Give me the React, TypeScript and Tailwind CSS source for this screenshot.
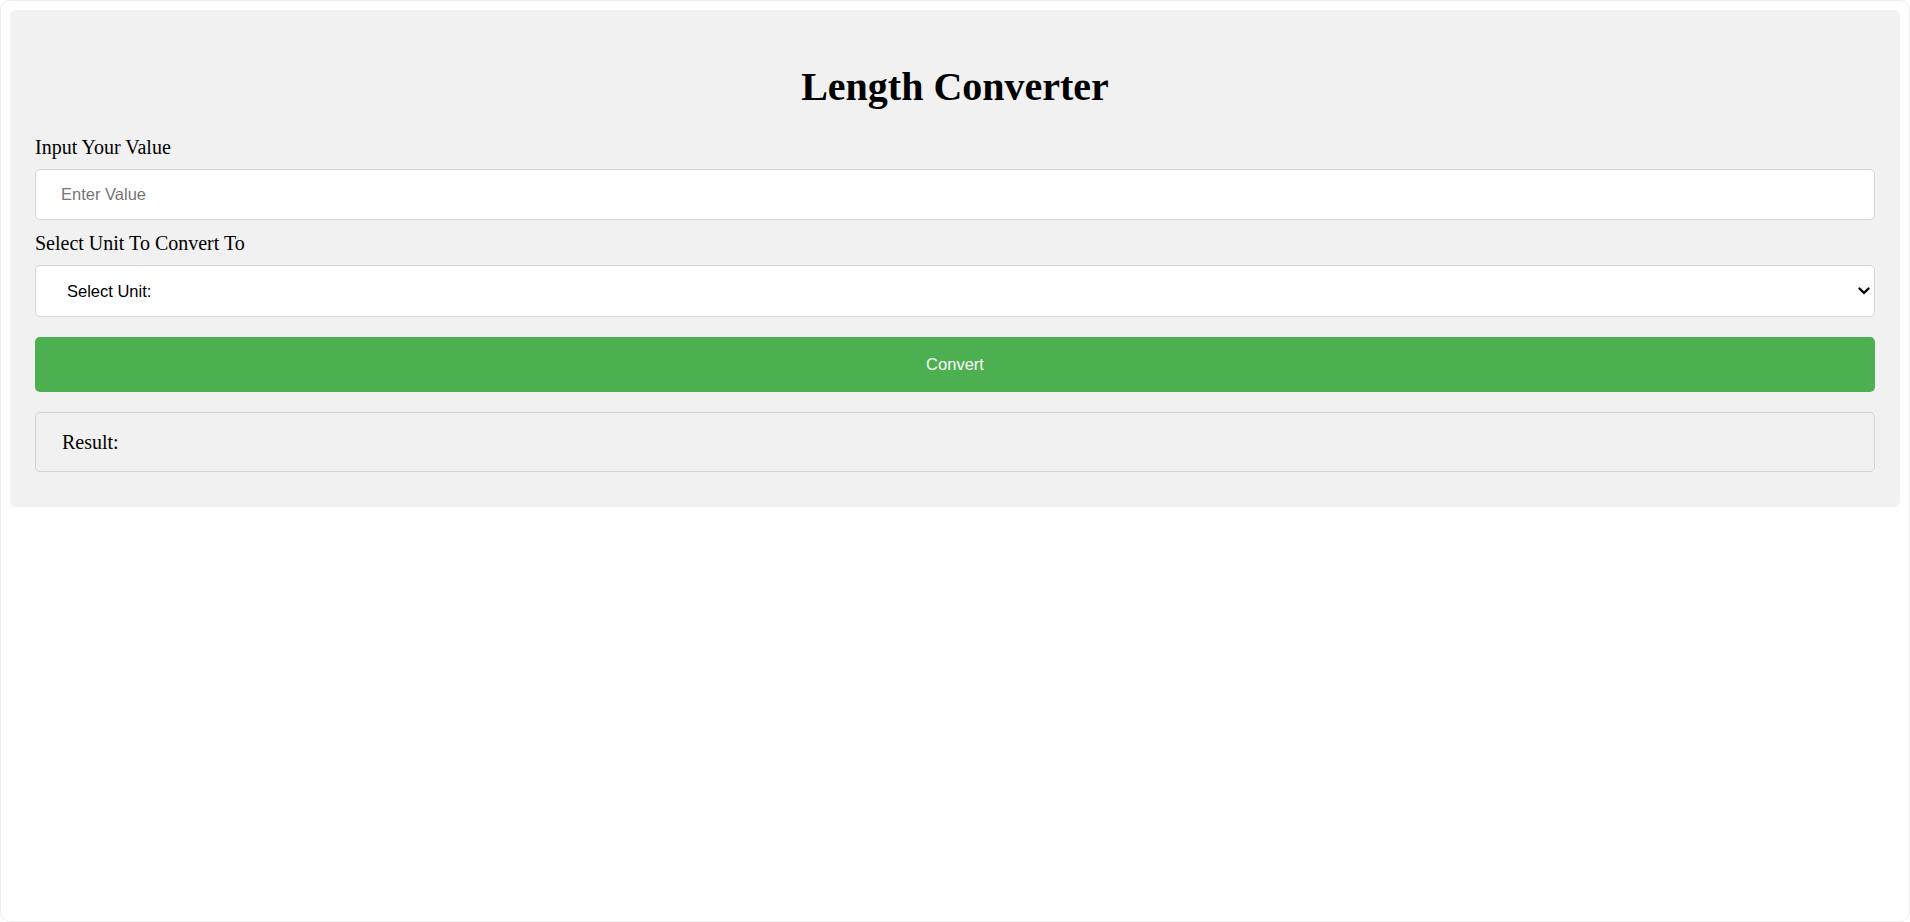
import { useState } from 'react';

// simple length converter card
export default function App() {
  const [value, setValue] = useState('');
  const [unit, setUnit] = useState('');
  const [result, setResult] = useState('');

  const convert = () => {
    const n = parseFloat(value);
    if (isNaN(n) || !unit) return setResult('');
    const factors: Record<string, number> = { cm: 100, mm: 1000, km: 0.001, in: 39.3701, ft: 3.28084 };
    setResult(`${(n * factors[unit]).toFixed(2)} ${unit}`);
  };

  return (
    <div className="h-[922px] w-full bg-white border border-[#eeeeee] rounded-[10px] overflow-hidden p-[9px]">
      <div className="bg-[#f1f1f1] rounded-[6px] px-[25px] pt-[25px] pb-[35px] font-['Liberation_Serif',serif] text-black">
        <h1 className="text-[40px] font-bold text-center leading-[46px] mt-[29px] mb-[26px]">Length Converter</h1>

        <label className="block text-[20px] leading-[23px]">Input Your Value</label>
        <input
          type="number"
          value={value}
          onChange={(e) => setValue(e.target.value)}
          placeholder="Enter Value"
          className="mt-[10px] block w-full h-[51px] bg-white border border-[#d6d6d6] rounded-[5px] pl-[25px] text-[16.5px] font-['Liberation_Sans',sans-serif] placeholder:text-[#757575] outline-none"
        />

        <label className="block mt-[12px] text-[20px] leading-[23px]">Select Unit To Convert To</label>
        <div className="relative mt-[10px]">
          <select
            value={unit}
            onChange={(e) => setUnit(e.target.value)}
            className="appearance-none block w-full h-[52px] bg-white border border-[#d6d6d6] rounded-[5px] pl-[31px] text-[16.5px] text-black font-['Liberation_Sans',sans-serif] outline-none"
          >
            <option value="">Select Unit:</option>
            <option value="cm">Centimeters</option>
            <option value="mm">Millimeters</option>
            <option value="km">Kilometers</option>
            <option value="in">Inches</option>
            <option value="ft">Feet</option>
          </select>
          <svg
            className="pointer-events-none absolute right-[5px] top-1/2 -translate-y-1/2"
            width="12"
            height="8"
            viewBox="0 0 12 8"
            fill="none"
          >
            <path d="M1.5 1.5 6 6l4.5-4.5" stroke="#000" strokeWidth="2.4" strokeLinecap="round" strokeLinejoin="round" />
          </svg>
        </div>

        <button
          onClick={convert}
          className="mt-[20px] block w-full h-[55px] bg-[#4caf50] text-white rounded-[5px] text-[16.5px] font-['Liberation_Sans',sans-serif]"
        >
          Convert
        </button>

        <div className="mt-[20px] h-[60px] border border-[#d4d4d4] rounded-[5px] pl-[26px] flex items-center text-[20px]">
          Result: {result}
        </div>
      </div>
    </div>
  );
}
